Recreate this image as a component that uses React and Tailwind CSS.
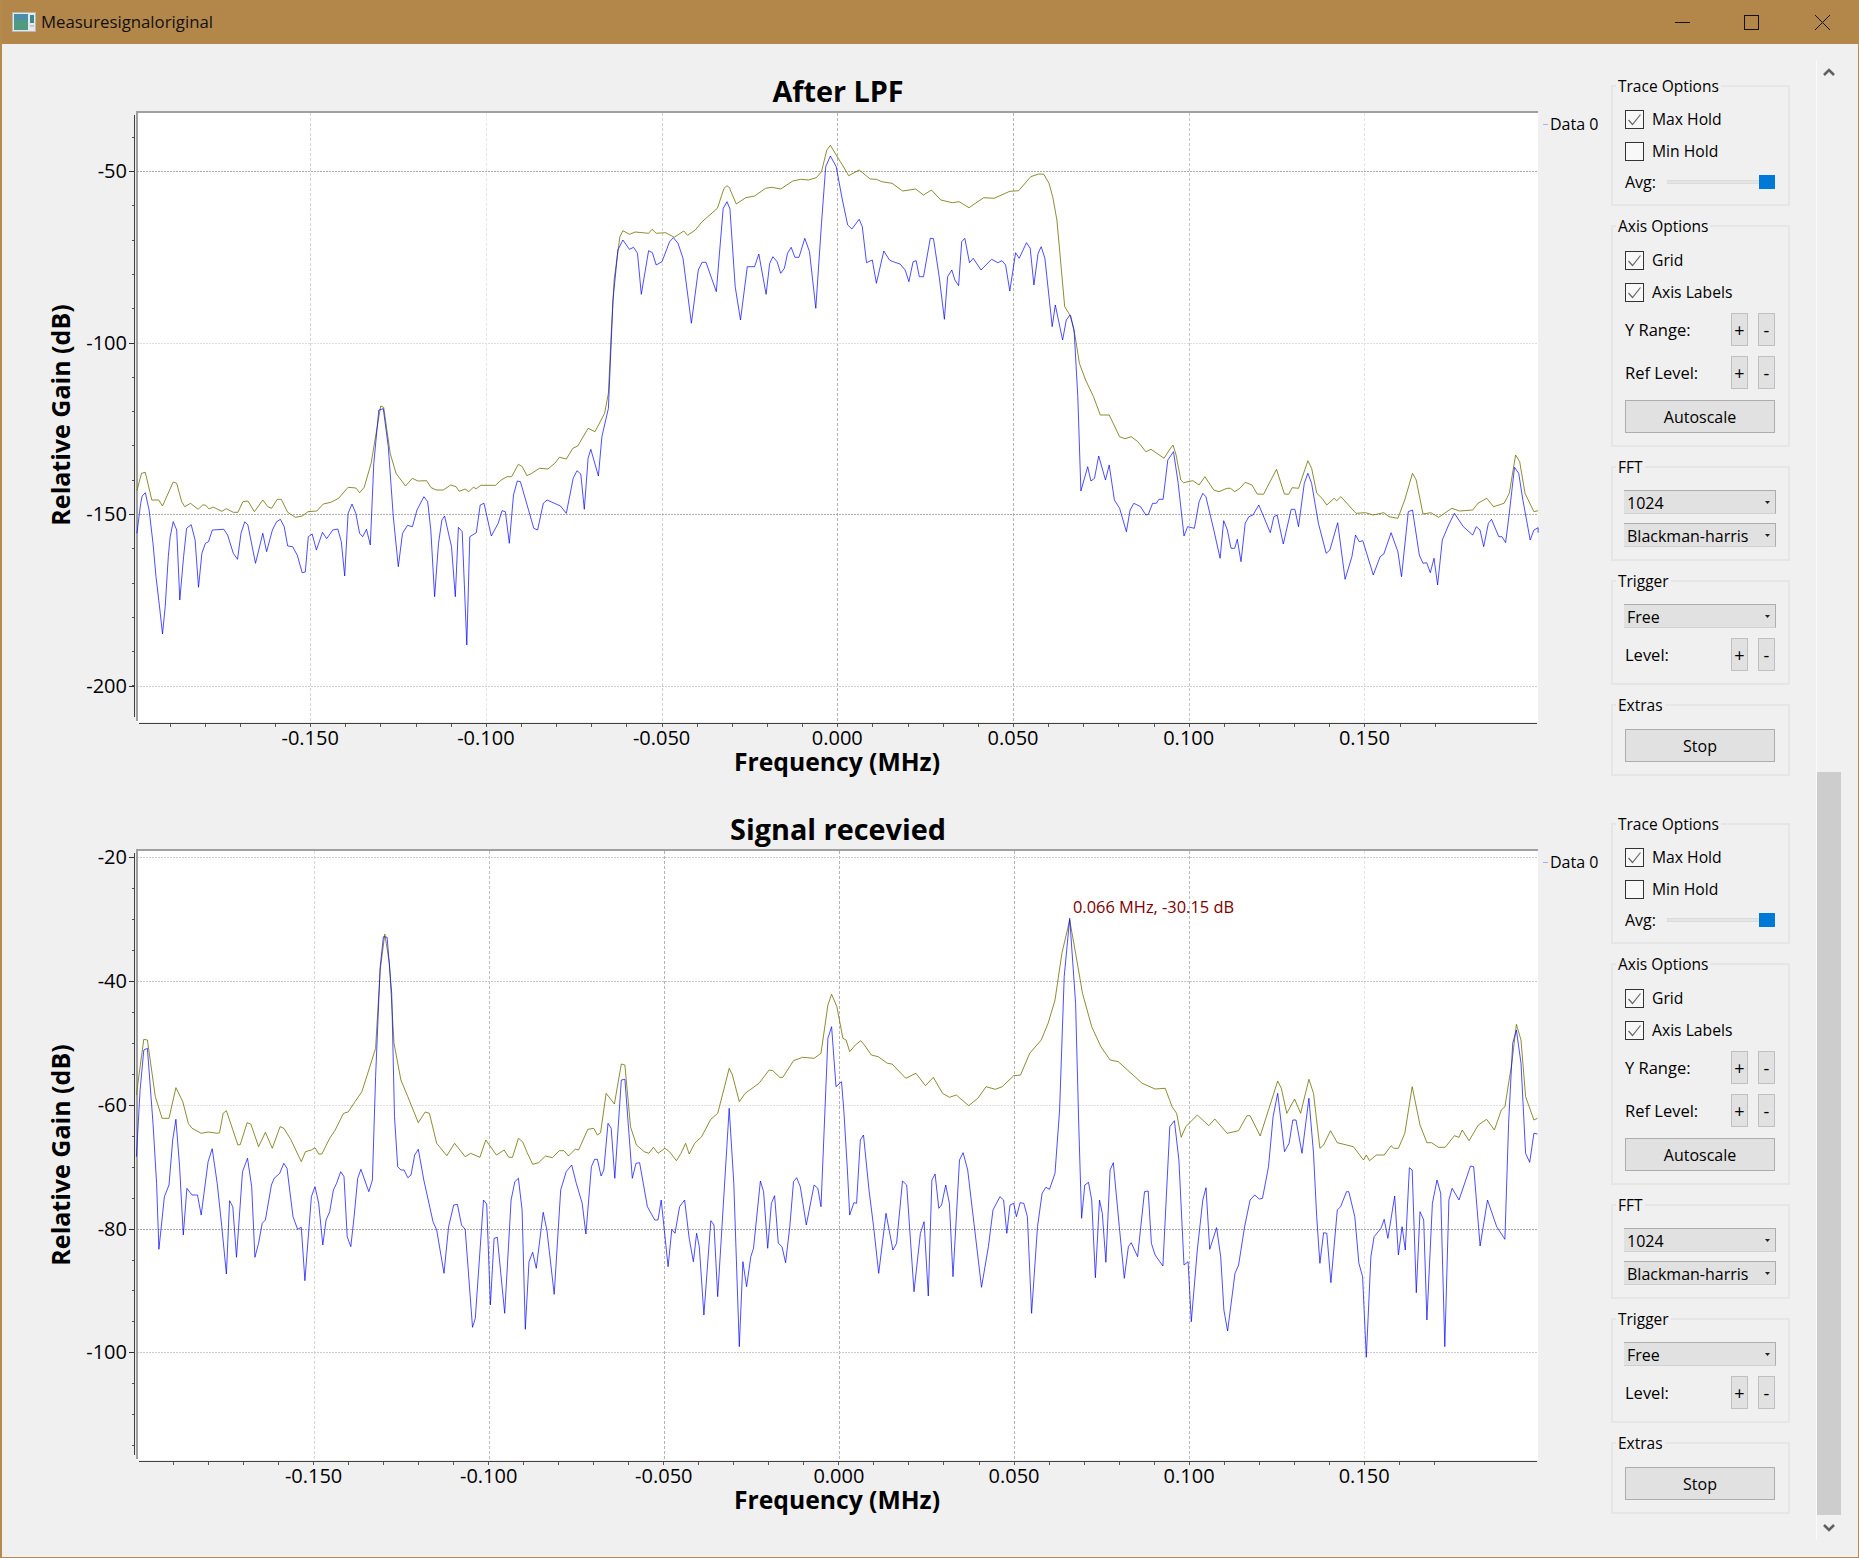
const z = (pts, x0, y0, sx) => pts.map(([x, y]) => `${(x0 + x / sx).toFixed(1)},${(y0 + y / 3).toFixed(1)}`).join(' ')

// traces were read off in crop coordinates, converted to window pixels by z()
const topBlue = z([[18,1210],[28,1120],[32,1098],[40,1088],[50,1140],[60,1240],[68,1340],[78,1440],[85,1512],[92,1430],[100,1280],[105,1220],[113,1175],[122,1200],[130,1410],[140,1280],[148,1195],[160,1184],[170,1230],[179,1372],[188,1270],[197,1240],[205,1235],[215,1200],[245,1198],[255,1215],[270,1270],[281,1288],[290,1210],[300,1175],[308,1185],[328,1300],[347,1210],[357,1265],[372,1200],[383,1175],[393,1168],[403,1190],[412,1248],[425,1250],[437,1275],[450,1328],[458,1326],[466,1220],[476,1212],[487,1260],[503,1207],[514,1226],[530,1200],[543,1197],[552,1235],[561,1338],[570,1150],[580,1122],[590,1150],[600,1210],[608,1220],[618,1198],[628,1245],[637,1000],[650,840],[662,836],[675,950],[688,1160],[701,1310],[712,1210],[725,1186],[738,1190],[750,1140],[768,1100],[778,1115],[786,1200],[796,1400],[806,1240],[815,1170],[822,1158],[840,1250],[850,1400],[858,1192],[868,1205],[880,1545],[888,1220],[905,1208],[915,1125],[925,1120],[944,1218],[962,1180],[972,1142],[981,1145],[991,1240],[1002,1095],[1012,1053],[1020,1055],[1055,1195],[1065,1200],[1080,1120],[1090,1110],[1125,1128],[1140,1150],[1158,1045],[1168,1022],[1178,1032],[1187,1138],[1197,985],[1204,958],[1224,1038],[1233,920],[1250,835],[1262,510],[1275,360],[1288,330],[1305,358],[1316,352],[1326,370],[1336,493],[1355,362],[1365,368],[1375,405],[1390,395],[1410,335],[1420,323],[1432,340],[1445,385],[1467,580],[1485,420],[1495,397],[1505,397],[1532,485],[1550,235],[1560,215],[1568,238]], 130, 130, 2.613)
  + ' ' + z([[0,240],[10,470],[20,570],[33,410],[47,410],[55,372],[69,493],[76,400],[82,380],[90,395],[97,430],[104,415],[110,370],[117,352],[124,382],[132,382],[143,325],[152,365],[164,535],[175,280],[183,110],[192,78],[203,110],[215,210],[225,285],[233,297],[247,268],[253,290],[261,398],[272,390],[280,460],[294,363],[305,390],[312,395],[325,402],[335,420],[342,455],[350,395],[356,392],[362,440],[370,440],[383,325],[389,326],[400,440],[410,568],[416,440],[424,420],[430,450],[437,467],[443,335],[449,325],[458,398],[465,385],[480,420],[500,388],[512,398],[520,392],[527,405],[535,483],[546,368],[553,385],[567,338],[574,355],[581,465],[589,370],[595,350],[602,385],[616,590],[622,525],[636,630],[643,570],[650,555],[658,600],[665,800],[671,1083],[684,1010],[690,1053],[697,1045],[705,978],[718,1050],[725,1005],[735,1110],[745,1135],[758,1205],[765,1140],[772,1120],[785,1130],[795,1155],[800,1153],[808,1120],[815,1120],[820,1108],[828,1108],[837,990],[848,965],[857,1060],[868,1218],[875,1190],[888,1195],[897,1115],[904,1090],[910,1100],[925,1200],[937,1285],[944,1172],[951,1200],[958,1255],[965,1255],[970,1228],[977,1295],[985,1180],[992,1160],[1000,1155],[1011,1125],[1033,1208],[1040,1160],[1046,1155],[1058,1242],[1073,1138],[1080,1138],[1087,1190],[1098,1060],[1105,1030],[1112,1060],[1125,1180],[1140,1270],[1147,1260],[1162,1178],[1176,1348],[1189,1280],[1196,1215],[1203,1235],[1210,1232],[1230,1335],[1243,1280],[1250,1272],[1264,1208],[1277,1265],[1284,1340],[1297,1145],[1305,1140],[1318,1275],[1325,1300],[1332,1298],[1339,1328],[1346,1285],[1353,1365],[1362,1230],[1374,1185],[1385,1150],[1402,1190],[1420,1215],[1427,1190],[1434,1200],[1441,1250],[1450,1180],[1456,1168],[1470,1220],[1476,1220],[1483,1238],[1490,1150],[1500,1012],[1508,1030],[1516,1110],[1530,1230],[1537,1200],[1545,1193],[1545,1208]], 730, 130, 1.912)

const topOlive = z([[18,1082],[30,1030],[40,1027],[57,1110],[75,1110],[85,1128],[113,1056],[122,1060],[135,1115],[143,1130],[158,1120],[178,1138],[190,1125],[197,1125],[207,1137],[217,1131],[240,1144],[252,1136],[270,1147],[282,1147],[295,1115],[308,1113],[325,1145],[347,1110],[360,1130],[370,1135],[385,1108],[395,1108],[412,1147],[432,1162],[450,1158],[465,1145],[488,1143],[505,1122],[525,1117],[545,1105],[570,1072],[590,1074],[600,1088],[612,1072],[630,1000],[655,828],[663,832],[680,970],[695,1030],[720,1068],[738,1045],[752,1053],[775,1052],[787,1073],[800,1080],[818,1080],[838,1065],[852,1070],[860,1084],[876,1077],[885,1085],[897,1072],[905,1076],[917,1066],[955,1066],[970,1050],[985,1040],[997,1040],[1015,1003],[1025,1010],[1037,1037],[1050,1030],[1070,1015],[1092,1017],[1110,1000],[1122,982],[1140,987],[1157,955],[1170,948],[1197,895],[1215,905],[1240,850],[1250,790],[1258,600],[1265,450],[1280,320],[1288,302],[1305,313],[1320,306],[1355,310],[1364,298],[1375,310],[1400,308],[1422,322],[1447,303],[1457,316],[1477,300],[1495,275],[1535,235],[1552,175],[1560,167],[1568,175]], 130, 130, 2.613)
  + ' ' + z([[0,178],[12,222],[30,203],[47,198],[68,175],[80,172],[97,177],[120,153],[135,148],[150,150],[165,143],[175,125],[185,60],[192,46],[205,80],[215,105],[227,137],[247,120],[268,147],[280,148],[290,155],[310,160],[330,183],[355,177],[370,195],[385,180],[403,210],[425,218],[438,215],[457,233],[485,203],[505,205],[535,184],[552,182],[575,140],[590,132],[600,133],[610,160],[617,200],[625,270],[640,530],[652,560],[660,620],[668,700],[680,750],[695,800],[708,855],[725,855],[745,920],[755,926],[767,920],[780,935],[795,965],[805,958],[830,985],[840,960],[847,945],[853,975],[862,1050],[867,1058],[885,1052],[897,1065],[908,1040],[925,1080],[935,1085],[950,1075],[957,1075],[965,1085],[975,1075],[985,1057],[998,1065],[1008,1092],[1020,1093],[1045,1018],[1060,1092],[1068,1093],[1075,1073],[1087,1075],[1105,992],[1112,1015],[1122,1090],[1132,1105],[1141,1125],[1155,1105],[1160,1112],[1168,1100],[1197,1150],[1215,1148],[1230,1155],[1250,1148],[1260,1160],[1277,1165],[1290,1110],[1305,1030],[1312,1050],[1325,1152],[1340,1148],[1355,1162],[1380,1135],[1395,1143],[1420,1140],[1430,1120],[1447,1105],[1460,1130],[1480,1120],[1490,1090],[1502,975],[1510,995],[1520,1090],[1537,1145],[1545,1142]], 730, 130, 1.912)

const botBlue = z([[14,920],[22,720],[30,600],[38,595],[50,820],[58,1000],[63,1198],[75,1040],[85,1005],[93,870],[100,808],[108,950],[116,1155],[124,1015],[135,1035],[147,1035],[155,1095],[170,935],[179,896],[190,1000],[200,1130],[210,1272],[217,1052],[224,1070],[232,1222],[245,965],[256,925],[265,1010],[272,1222],[280,1180],[288,1120],[295,1110],[308,1005],[314,985],[326,970],[335,940],[342,955],[355,1100],[365,1138],[373,1132],[381,1292],[395,1040],[403,1010],[411,1060],[420,1185],[427,1110],[435,1085],[443,1020],[450,1000],[459,965],[466,980],[473,1160],[481,1190],[488,1100],[496,985],[503,958],[520,1025],[528,990],[535,680],[545,350],[552,260],[560,262],[570,430],[576,800],[583,950],[590,960],[597,960],[605,983],[612,975],[620,915],[628,898],[640,990],[660,1115],[668,1140],[684,1270],[694,1130],[705,1065],[713,1063],[722,1125],[730,1138],[746,1432],[752,1405],[770,1050],[777,1062],[785,1365],[793,1165],[800,1162],[816,1390],[830,1050],[838,995],[846,985],[854,1080],[861,1438],[869,1235],[877,1207],[885,1255],[900,1087],[908,1140],[924,1333],[938,1020],[950,965],[962,945],[972,1000],[985,1060],[993,1152],[1005,950],[1012,928],[1018,928],[1026,978],[1032,960],[1041,820],[1048,835],[1056,985],[1070,690],[1078,688],[1094,985],[1102,940],[1110,938],[1127,1070],[1143,1110],[1150,1110],[1157,1050],[1172,1250],[1180,1138],[1187,1150],[1197,1070],[1208,1050],[1218,1165],[1227,1235],[1234,1150],[1240,1190],[1250,1395],[1265,1112],[1272,1125],[1280,1340],[1305,775],[1315,1000],[1327,1490],[1335,1235],[1343,1310],[1352,1220],[1358,1195],[1373,993],[1380,1025],[1389,1195],[1397,1060],[1404,1037],[1412,1180],[1420,1190],[1428,1238],[1437,1130],[1445,995],[1452,983],[1460,1010],[1473,1125],[1490,1005],[1498,1015],[1505,1070],[1520,565],[1528,530]], 130, 850, 2.178)
  + ' ' + z([[13,710],[25,695],[30,780],[38,960],[43,1095],[52,1058],[58,1060],[66,870],[73,855],[85,1020],[95,1130],[106,1270],[122,1090],[137,1200],[145,1180],[158,993],[167,1005],[183,1325],[197,1150],[205,1115],[214,1338],[222,990],[229,972],[237,1075],[243,1065],[252,1005],[260,1060],[268,1280],[282,930],[290,908],[300,960],[330,1312],[345,1190],[355,1080],[370,1040],[378,1050],[385,1150],[392,1065],[400,1060],[406,1100],[414,1058],[422,1060],[430,1100],[439,1390],[452,1130],[462,1030],[470,1012],[478,1018],[490,970],[500,780],[510,380],[522,205],[535,460],[542,840],[548,1105],[555,1005],[563,997],[570,1050],[578,1283],[587,1050],[593,1090],[601,1237],[610,960],[617,938],[630,1130],[641,1285],[650,1190],[656,1178],[670,1220],[685,1025],[693,1023],[700,1180],[708,1215],[725,1248],[740,830],[750,812],[760,930],[771,1245],[780,1235],[787,1415],[800,1200],[812,1050],[819,1013],[827,1198],[842,1133],[851,1220],[858,1380],[866,1443],[882,1270],[890,1245],[903,1130],[915,1050],[925,1035],[935,1047],[942,1045],[955,950],[965,800],[975,730],[990,905],[1000,880],[1008,810],[1015,810],[1028,910],[1043,745],[1053,910],[1060,1100],[1067,1240],[1075,1148],[1082,1150],[1091,1298],[1105,1080],[1112,1070],[1125,1025],[1130,1025],[1143,1100],[1152,1240],[1160,1280],[1168,1522],[1178,1220],[1185,1160],[1200,1135],[1207,1108],[1215,1165],[1230,1038],[1238,1215],[1246,1130],[1253,1200],[1262,953],[1268,960],[1277,1328],[1285,1085],[1293,1110],[1300,1410],[1312,1060],[1322,990],[1330,1030],[1339,1490],[1348,1050],[1355,1015],[1370,1050],[1395,948],[1402,950],[1416,1188],[1432,1050],[1452,1130],[1470,1168],[1478,820],[1487,580],[1495,540],[1505,640],[1515,910],[1524,937],[1533,850],[1541,852]], 830, 850, 2.178)

const botOlive = z([[14,735],[22,650],[30,568],[38,570],[55,740],[70,805],[85,805],[100,713],[115,755],[127,820],[135,835],[155,850],[170,846],[190,850],[195,848],[203,790],[210,782],[235,885],[240,884],[255,818],[263,822],[280,890],[295,847],[310,895],[327,830],[335,835],[350,868],[373,935],[382,905],[395,900],[403,893],[411,912],[418,912],[435,865],[447,840],[465,790],[475,786],[490,755],[505,725],[520,660],[535,595],[545,360],[555,252],[565,340],[575,580],[590,690],[605,740],[628,818],[643,786],[652,790],[668,880],[690,917],[707,880],[730,920],[742,910],[762,922],[775,870],[798,915],[815,900],[825,922],[833,922],[846,865],[855,875],[865,908],[877,943],[890,938],[905,918],[920,923],[935,902],[945,902],[955,918],[970,897],[977,900],[997,838],[1010,835],[1018,855],[1025,848],[1037,730],[1055,762],[1070,642],[1078,645],[1090,830],[1103,885],[1120,905],[1130,910],[1140,892],[1150,910],[1165,895],[1175,905],[1190,932],[1200,910],[1210,880],[1218,912],[1230,880],[1245,860],[1265,808],[1280,790],[1293,720],[1305,655],[1312,675],[1327,755],[1340,730],[1370,700],[1392,660],[1400,662],[1415,682],[1422,682],[1445,632],[1465,622],[1490,625],[1505,610],[1520,465],[1528,433]], 130, 850, 2.178)
  + ' ' + z([[15,470],[28,565],[35,570],[43,605],[55,585],[67,572],[75,585],[90,615],[105,620],[125,640],[135,642],[165,685],[187,670],[208,707],[225,682],[245,730],[260,742],[275,735],[302,767],[322,745],[340,710],[360,718],[375,710],[400,677],[415,675],[435,610],[460,570],[475,520],[490,450],[505,310],[522,210],[535,310],[550,430],[570,530],[590,590],[610,630],[628,635],[680,700],[708,717],[730,715],[745,770],[755,790],[765,862],[775,830],[800,795],[825,827],[838,807],[865,850],[890,842],[908,797],[915,797],[937,858],[975,693],[983,715],[995,790],[1012,747],[1025,790],[1043,688],[1053,730],[1067,895],[1075,885],[1090,842],[1105,878],[1140,890],[1162,930],[1168,915],[1175,932],[1190,915],[1207,915],[1222,887],[1228,895],[1238,895],[1252,850],[1268,710],[1285,825],[1300,878],[1310,878],[1325,892],[1340,892],[1360,857],[1370,862],[1377,840],[1392,872],[1412,825],[1430,808],[1447,840],[1462,780],[1470,770],[1485,640],[1495,523],[1505,570],[1515,740],[1533,810],[1541,805]], 830, 850, 2.178)

const xLabels = ['-0.150', '-0.100', '-0.050', '0.000', '0.050', '0.100', '0.150']

const plots = [
  {
    title: 'After LPF', svgTop: 106, canvasTop: 112, canvasBottom: 723,
    x0: 310.2, xStep: 175.7,
    yLabels: [['-50', 171, '#a8a8a8'], ['-100', 342.5, '#dedede'], ['-150', 514, '#ababab'], ['-200', 686, '#cfcfcf']],
    yMinorStart: 171 - 34.3, yMinorStep: 34.3,
    xGrid: ['#d4d4d4', '#e6e6e6', '#d0d0d0', '#b4b4b4', '#b4b4b4', '#c8c8c8', '#e2e2e2'],
    legendY: 124, labelY: 415, blue: topBlue, olive: topOlive,
  },
  {
    title: 'Signal recevied', svgTop: 844, canvasTop: 850, canvasBottom: 1461,
    x0: 313.6, xStep: 175.1,
    yLabels: [['-20', 857.3, '#cccccc'], ['-40', 981, '#c4c4c4'], ['-60', 1104.8, '#e0e0e0'], ['-80', 1228.5, '#a8a8a8'], ['-100', 1352.3, '#cccccc']],
    yMinorStart: 857.3, yMinorStep: 30.94,
    xGrid: ['#d8d8d8', '#c0c0c0', '#b4b4b4', '#b4b4b4', '#b4b4b4', '#bcbcbc', '#e2e2e2'],
    legendY: 862, labelY: 1155, blue: botBlue, olive: botOlive, marker: true,
  },
]

function Chart({ p }) {
  const { canvasTop: top, canvasBottom: bottom } = p
  const xMinor = []
  for (let i = -5; i < 36; i++) {
    const x = p.x0 - 140.56 + (i + 1) * (p.xStep / 5)
    if (x > 140 && x < 1536) xMinor.push(x)
  }
  const yMinor = []
  for (let y = p.yMinorStart; y < bottom - 6; y += p.yMinorStep) yMinor.push(y)

  return (
    <svg width="1609" height="646" viewBox={`2 ${p.svgTop} 1609 646`} className="block">
      <rect x="137" y={top + 1} width="1401" height={bottom - top - 2} fill="#ffffff" />
      <g shapeRendering="crispEdges">
        {p.xGrid.map((c, i) => {
          const x = Math.round(p.x0 + i * p.xStep) + 0.5
          return <line key={i} x1={x} x2={x} y1={top + 1} y2={bottom - 1} stroke={c} strokeDasharray="3 2" />
        })}
        {p.yLabels.map(([t, y, c]) => (
          <line key={t} x1="137" x2="1538" y1={Math.round(y) + 0.5} y2={Math.round(y) + 0.5} stroke={c} strokeDasharray="2 1" />
        ))}
        <rect x="136" y={top - 1} width="1402" height="2" fill="#a0a0a0" />
        <rect x="136" y={top - 1} width="1.5" height={bottom - top - 1} fill="#a0a0a0" />
        <rect x="134" y={top + 3} width="1" height={bottom - top - 9} fill="#404040" />
        <rect x="139" y={bottom} width="1398" height="1" fill="#404040" />
        {yMinor.map((y, i) => (
          <line key={i} x1="132" x2="134" y1={Math.round(y) + 0.5} y2={Math.round(y) + 0.5} stroke="#555555" />
        ))}
        {p.yLabels.map(([t, y]) => (
          <line key={t} x1="129" x2="134" y1={Math.round(y) + 0.5} y2={Math.round(y) + 0.5} stroke="#303030" />
        ))}
        {xMinor.map((x, i) => (
          <line key={i} x1={Math.round(x) + 0.5} x2={Math.round(x) + 0.5} y1={bottom + 1} y2={bottom + 4} stroke="#555555" />
        ))}
        <line x1="1543" x2="1548" y1={p.legendY + 0.5} y2={p.legendY + 0.5} stroke="#aaaaff" />
      </g>
      <polyline points={p.olive} fill="none" stroke="#707000" strokeWidth="0.8" />
      <polyline points={p.blue} fill="none" stroke="#0000ff" strokeWidth="0.7" />
      <g fill="#000000" fontSize="20">
        {p.yLabels.map(([t, y]) => (
          <text key={t} x="127" y={y + 7} textAnchor="end">{t}</text>
        ))}
        {xLabels.map((t, i) => (
          <text key={t} x={p.x0 + i * p.xStep} y={bottom + 22} textAnchor="middle">{t}</text>
        ))}
        <text x="1550" y={p.legendY + 6} fontSize="16">Data 0</text>
        <text transform={`translate(70 ${p.labelY}) rotate(-90)`} textAnchor="middle" fontSize="25" fontWeight="700">
          Relative Gain (dB)
        </text>
        {p.marker && <text x="1073" y="913" fontSize="16.4" fill="#800000">0.066 MHz, -30.15 dB</text>}
      </g>
    </svg>
  )
}

function Plot({ p, className }) {
  return (
    <div className={className}>
      <div className="h-[32px] pt-[3px] pl-[136px] pr-[73px] flex items-center justify-center text-[28.8px] leading-none font-bold text-black">
        {p.title}
      </div>
      <Chart p={p} />
      <div className="h-[20px] pl-[136px] pr-[75px] flex items-center justify-center text-[24.7px] leading-none font-bold text-black">
        Frequency (MHz)
      </div>
    </div>
  )
}

function Group({ title, className, children }) {
  return (
    <div className={`relative w-[179px] border-2 border-[#e6e6e6] pl-[12px] pr-[13px] ${className}`}>
      <span className="absolute -top-[12px] left-[3px] bg-[#f0f0f0] px-[2px] text-[15.5px] leading-[22px] text-black">{title}</span>
      {children}
    </div>
  )
}

function Check({ label, checked, className }) {
  return (
    <div className={`flex items-center h-[19px] ${className || ''}`}>
      <span className="w-[19px] h-[19px] border border-[#333333] bg-[#f8f8f8] flex items-center justify-center shrink-0">
        {checked && (
          <svg width="15" height="13" viewBox="0 0 15 13">
            <polyline points="1.5,7 5.5,11.5 13.5,1.5" fill="none" stroke="#666666" strokeWidth="1.2" />
          </svg>
        )}
      </span>
      <span className="ml-[8px] pt-[1px] text-[15.7px] leading-none text-black">{label}</span>
    </div>
  )
}

function SmallButton({ label }) {
  return (
    <div className="w-[17px] h-full bg-[#e1e1e1] border border-[#c0c0c0] flex items-center justify-center text-[18px] leading-none text-black">
      {label}
    </div>
  )
}

function Stepper({ label, className }) {
  return (
    <div className={`flex items-center h-[33px] ${className || ''}`}>
      <span className="flex-1 pt-[1px] text-[16.5px] leading-none text-black">{label}</span>
      <SmallButton label="+" />
      <div className="w-[10px]" />
      <SmallButton label="-" />
    </div>
  )
}

function WideButton({ label, className }) {
  return (
    <div className={`h-[33px] bg-[#e1e1e1] border border-[#adadad] flex items-center justify-center text-[16px] leading-none text-black ${className || ''}`}>
      {label}
    </div>
  )
}

function Select({ label, className }) {
  return (
    <div className={`-mx-[1px] h-[24px] bg-[#e1e1e1] border-t border-r border-[#adadad] border-b-[#d0d0d0] border-b flex items-center justify-between pl-[3px] pr-[5px] text-[16px] leading-none text-black ${className || ''}`}>
      <span className="pt-[1px]">{label}</span>
      <svg width="5" height="3" viewBox="0 0 5 3"><polygon points="0,0 5,0 2.5,3" fill="#222222" /></svg>
    </div>
  )
}

function Panel({ className }) {
  return (
    <div className={`flex flex-col gap-[19px] ${className || ''}`}>
      <Group title="Trace Options" className="h-[121px] pt-[23px]">
        <Check label="Max Hold" checked />
        <Check label="Min Hold" className="mt-[13px]" />
        <div className="mt-[14px] h-[14px] flex items-center">
          <span className="w-[42px] text-[16px] leading-none text-black">Avg:</span>
          <div className="relative flex-1 h-[4px] bg-[#e4e4e4] border border-[#dcdcdc]">
            <div className="absolute -right-[1px] -top-[6px] w-[16px] h-[14px] bg-[#0078d7]" />
          </div>
        </div>
      </Group>
      <Group title="Axis Options" className="h-[222px] pt-[24px]">
        <Check label="Grid" checked />
        <Check label="Axis Labels" checked className="mt-[13px]" />
        <Stepper label="Y Range:" className="mt-[11px]" />
        <Stepper label="Ref Level:" className="mt-[10px]" />
        <WideButton label="Autoscale" className="mt-[11px]" />
      </Group>
      <Group title="FFT" className="h-[95px] pt-[22px]">
        <Select label="1024" />
        <Select label="Blackman-harris" className="mt-[9px]" />
      </Group>
      <Group title="Trigger" className="h-[105px] pt-[22px]">
        <Select label="Free" />
        <Stepper label="Level:" className="mt-[10px]" />
      </Group>
      <Group title="Extras" className="h-[72px] pt-[23px]">
        <WideButton label="Stop" />
      </Group>
    </div>
  )
}

export default function App() {
  return (
    <div className="w-[1859px] h-[1558px] flex flex-col bg-[#f0f0f0] border-l-2 border-r border-b border-[#b58a4d] font-['Open_Sans',sans-serif] overflow-hidden">
      <header className="h-[44px] shrink-0 -ml-[2px] -mr-[1px] bg-[#b3874a] flex items-center pl-[12px] text-[16.8px] text-[#111111]">
        <svg width="24" height="20" viewBox="0 0 24 20" className="shrink-0">
          <rect x="0.5" y="0.5" width="23" height="19" fill="#e8e8e8" stroke="#b8b8b8" />
          <rect x="2" y="2" width="14" height="16" fill="#4f9a80" />
          <rect x="2" y="2" width="14" height="6" fill="#4a8fa8" />
          <rect x="18" y="3" width="4" height="8" fill="#3f8a90" />
          <rect x="18" y="13" width="4" height="2" fill="#c8c8c8" />
        </svg>
        <span className="ml-[5px]">Measuresignaloriginal</span>
        <div className="flex-1" />
        <svg width="185" height="44" viewBox="1674 0 185 44" fill="none" stroke="#111111" className="shrink-0">
          <line x1="1675" x2="1690" y1="22.5" y2="22.5" />
          <rect x="1744.5" y="15.5" width="14" height="14" />
          <path d="M1815 15 L1830 30 M1830 15 L1815 30" />
        </svg>
      </header>
      <div className="flex-1 flex min-h-0">
        <div className="w-[1609px] shrink-0">
          <Plot p={plots[0]} className="pt-[30px]" />
          <Plot p={plots[1]} className="pt-[40px]" />
        </div>
        <div className="w-[179px] shrink-0 pt-[41px]">
          <Panel />
          <Panel className="mt-[47px]" />
        </div>
        <div className="ml-[26px] mt-[16px] w-[25px] h-[1480px] border-l border-[#fafafa] flex flex-col items-center relative">
          <svg width="12" height="8" viewBox="0 0 12 8" className="mt-[8px]">
            <polyline points="1,7 6,2 11,7" fill="none" stroke="#606060" strokeWidth="2.6" />
          </svg>
          <div className="absolute left-0 right-0 top-[712px] h-[743px] bg-[#cdcdcd]" />
          <svg width="12" height="8" viewBox="0 0 12 8" className="absolute bottom-[8px]">
            <polyline points="1,1 6,6 11,1" fill="none" stroke="#606060" strokeWidth="2.6" />
          </svg>
        </div>
      </div>
    </div>
  )
}
